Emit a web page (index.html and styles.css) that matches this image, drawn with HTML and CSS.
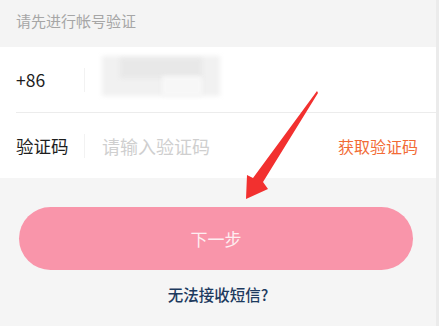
FILE: index.html
```html
<!DOCTYPE html>
<html lang="zh-CN">
<head>
<meta charset="utf-8">
<link rel="stylesheet" href="styles.css">
</head>
<body>
<div class="page">
  <div class="hint">请先进行帐号验证</div>
  <div class="card">
    <div class="row">
      <span class="label">+86</span>
      <span class="sep"></span>
      <span class="phone">
        <span class="blur b1"></span>
        <span class="blur b2"></span>
        <span class="blur b3"></span>
      </span>
    </div>
    <div class="divider"></div>
    <div class="row">
      <span class="label">验证码</span>
      <span class="sep"></span>
      <span class="placeholder">请输入验证码</span>
      <span class="getcode">获取验证码</span>
    </div>
  </div>
  <div class="actions">
    <button class="next">下一步</button>
    <div class="link">无法接收短信?</div>
  </div>
  <svg class="arrow" width="439" height="326" viewBox="0 0 439 326">
    <path d="M317 91 L318 93 L263 182 L268 189 L246 199 L247 175 L253 178 Z" fill="#f2302f"/>
  </svg>
</div>
</body>
</html>
```
FILE: styles.css
```css
html, body {
  margin: 0;
  padding: 0;
}
body {
  width: 439px;
  height: 326px;
  overflow: hidden;
  background: #f5f5f5;
  font-family: "Noto Sans CJK SC", "Noto Sans", sans-serif;
}
.page {
  position: relative;
  width: 436px;
  height: 326px;
  border-right: 3px solid #ebebeb;
  background: #f5f5f5;
}
.hint {
  height: 47px;
  box-sizing: border-box;
  padding: 9px 0 0 16px;
  font-size: 15px;
  line-height: 24px;
  color: #a6a6a6;
  background: #f4f4f4;
}
.card {
  background: #fff;
  display: flex;
  flex-direction: column;
}
.row {
  height: 65px;
  display: flex;
  align-items: center;
  padding: 0 18px 0 16px;
}
.divider {
  height: 1px;
  margin-left: 16px;
  background: #ececec;
}
.label {
  width: 68px;
  font-size: 17.5px;
  color: #1e1e1e;
}
.sep {
  width: 1px;
  height: 24px;
  background: #f2f2f2;
  margin-right: 17px;
}
.phone {
  position: relative;
  width: 120px;
  height: 40px;
  margin-top: -8px;
  display: block;
}
.blur {
  position: absolute;
  display: block;
  filter: blur(2px);
}
.b1 { left: 0; top: 0; width: 118px; height: 40px; background: #f1f1f1; }
.b2 { left: 18px; top: 2px; width: 82px; height: 20px; background: #e8e8e8; }
.b3 { left: 60px; top: 20px; width: 40px; height: 20px; background: #f7f7f7; }
.placeholder {
  font-size: 18px;
  color: #cfcfcf;
  flex: 1;
}
.getcode {
  font-size: 16px;
  color: #f26b36;
}
.actions {
  display: flex;
  flex-direction: column;
  align-items: center;
  padding-top: 29px;
}
.next {
  align-self: flex-start;
  width: 394px;
  height: 63px;
  margin-left: 19px;
  border: none;
  border-radius: 32px;
  background: #f995aa;
  color: #feeef1;
  font-family: inherit;
  font-size: 17px;
  padding: 0;
}
.link {
  margin-top: 13px;
  font-size: 15.5px;
  line-height: 22px;
  color: #1d3a5e;
  font-weight: 500;
}
.arrow {
  position: absolute;
  left: 0;
  top: 0;
  pointer-events: none;
}
```
